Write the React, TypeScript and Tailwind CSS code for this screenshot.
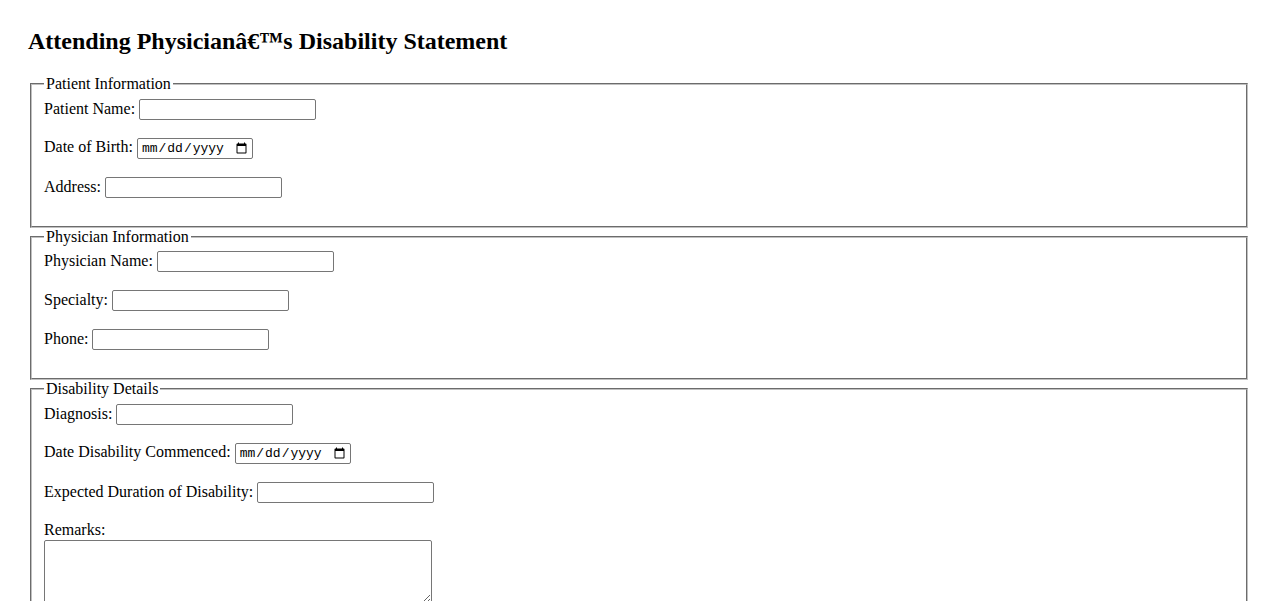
import type { ReactNode } from 'react';

const textInput =
  'w-[177px] h-[21px] border border-[#767676] rounded-[2px] px-[2px] bg-white text-[13.33px] font-["Liberation_Sans",sans-serif]';
const dateInput =
  'w-[116px] h-[21px] border border-[#767676] rounded-[2px] pl-[3px] pr-[2px] bg-white text-black text-[13px] font-["Liberation_Mono",monospace]';

function Section({ title, children }: { title: string; children: ReactNode }) {
  return (
    <fieldset className="mx-[2px] border-2 [border-style:groove] border-[#c0c0c0] px-3 pt-[5.6px] pb-[10px]">
      <legend className="px-[2px]">{title}</legend>
      {children}
    </fieldset>
  );
}

function Row({ label, type = 'text' }: { label: string; type?: 'text' | 'date' | 'tel' }) {
  return (
    <div className="mb-[18px]">
      <label>{label}</label>{' '}
      <input type={type} className={type === 'date' ? dateInput : textInput} />
    </div>
  );
}

export default function App() {
  return (
    <div className="min-h-screen bg-white p-[8px] text-[16px] leading-[normal] text-black font-['Liberation_Serif','Times_New_Roman',serif]">
      <div className="px-[20px]">
        <h2 className="my-[20px] text-[24px] font-bold">Attending Physicianâ€™s Disability Statement</h2>

        <form>
          <Section title="Patient Information">
            <Row label="Patient Name:" />
            <Row label="Date of Birth:" type="date" />
            <Row label="Address:" />
          </Section>

          <Section title="Physician Information">
            <Row label="Physician Name:" />
            <Row label="Specialty:" />
            <Row label="Phone:" type="tel" />
          </Section>

          <Section title="Disability Details">
            <Row label="Diagnosis:" />
            <Row label="Date Disability Commenced:" type="date" />
            <Row label="Expected Duration of Disability:" />
            <div className="mb-[18px]">
              <label className="block">Remarks:</label>
              <textarea
                rows={4}
                className="block mt-[1px] w-[388px] h-[64px] border border-[#767676] rounded-[2px] p-[2px] bg-white text-[13.33px] font-['Liberation_Mono',monospace]"
              />
            </div>
          </Section>
        </form>
      </div>
    </div>
  );
}
